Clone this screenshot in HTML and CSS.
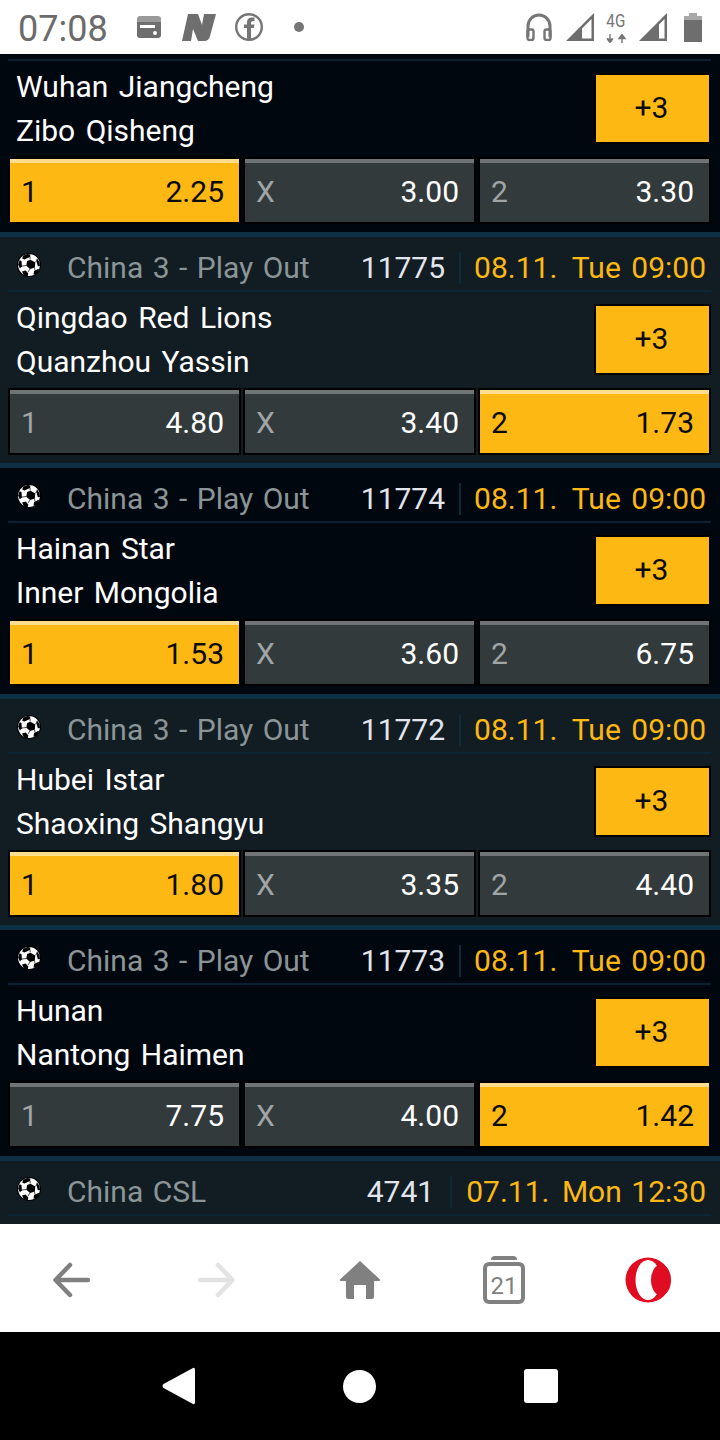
FILE: index.html
```html
<!DOCTYPE html>
<html lang="en">
<head>
<meta charset="utf-8">
<title>Odds</title>
<link rel="stylesheet" href="styles.css">
</head>
<body>
<svg class="defs" width="0" height="0" aria-hidden="true">
  <symbol id="ball" viewBox="0 0 24 24">
    <circle cx="12" cy="12" r="12" fill="#000"/>
    <circle cx="12" cy="12" r="10.900" fill="#fff"/>
    <path d="M13.500 6.800l4.800 2.600-.5 5-4.700 1.600-3.800-3.200.8-4.700z" fill="#000"/>
    <path d="M6 2.800l4.500-1.800 3 .4-.6 2.600-5.400 2.400-2.200-.6z" fill="#000"/>
    <path d="M1.200 11.500l1.300-4.300 2 .8.400 5.200-2 2.200z" fill="#000"/>
    <path d="M20 5.200l2.600 4.300.4 3.500-2.200.3-1.500-5.800z" fill="#000"/>
    <path d="M5 18.600l3.700-1 2.600 2.800-.5 3-3.800-.8z" fill="#000"/>
    <path d="M16.500 21.800l.6-3.800 4-1.900 1 .5-1.900 3.800z" fill="#000"/>
    <path d="M13 6.500l.2-3M18 9.500l1.500-1.500M17.500 14.500l.5 3M13 16l-2 3M9.500 12.500L5 13" stroke="#000" stroke-width=".7" fill="none"/>
  </symbol>
</svg>
<div class="screen">
  <header class="status">
    <span class="clock">07:08</span>
    <svg class="s-card" width="24" height="22" viewBox="0 0 24 22"><path d="M3 0h18a3 3 0 0 1 3 3v3H0V3a3 3 0 0 1 3-3z" fill="#9a9a9a"/><path fill-rule="evenodd" d="M0 6h24v13a3 3 0 0 1-3 3H3a3 3 0 0 1-3-3zM3 9v3h15V9zM18 15a2 2 0 0 0 0 4 2 2 0 0 0 0-4z" fill="#6e6e6e"/></svg>
    <svg class="s-n" width="34" height="27" viewBox="0 0 34 27"><path d="M6 0h10l4 11 2-11h12l-6 22q-1 5-6 5h-6l-5-12-2 12H0z" fill="#6e6e6e"/></svg>
    <svg class="s-fb" width="28" height="28" viewBox="0 0 28 28"><circle cx="14" cy="14" r="12.800" fill="none" stroke="#757575" stroke-width="2.400"/><path d="M12 26v-11H9v-3.500h3V9q0-4.500 5-4.500h2.500V8H18q-2 0-2 1.700v1.800h3.500l-.6 3.500H16v11z" fill="#757575"/></svg>
    <span class="s-dot"></span>
    <span class="status-right">
      <svg width="26" height="28" viewBox="0 0 26 28"><path d="M2 24V13a11 11 0 0 1 22 0v11" fill="none" stroke="#757575" stroke-width="3"/><rect x="1.500" y="16.500" width="6" height="10.500" rx="2" fill="none" stroke="#757575" stroke-width="2.400"/><rect x="18.500" y="16.500" width="6" height="10.500" rx="2" fill="none" stroke="#757575" stroke-width="2.400"/></svg>
      <svg class="s-sig" width="28" height="28" viewBox="0 0 28 28"><path fill-rule="evenodd" d="M0 28L28 0v28zM16 25.500h9.500V6L16 15.500z" fill="#6e6e6e"/></svg>
      <span class="net"><span class="net-t">4G</span><svg width="20" height="9" viewBox="0 0 20 9"><path d="M4 0v5M1 4.500l3 4 3-4M16 9V3M13 4.500l3-4 3 4z" fill="#757575" stroke="#757575" stroke-width="1.400"/></svg></span>
      <svg class="s-sig2" width="28" height="28" viewBox="0 0 28 28"><path fill-rule="evenodd" d="M0 28L28 0v28zM20 25.500h5.500V6L20 11.500z" fill="#6e6e6e"/></svg>
      <svg class="s-bat" width="18" height="29" viewBox="0 0 18 29"><path d="M5 0h8v3H5z" fill="#a8a8a8"/><path d="M0 3h18v5H0z" fill="#a8a8a8"/><path d="M0 7h18v22H0z" fill="#6e6e6e"/></svg>
    </span>
  </header>

  <main class="feed">
    <div class="feed-inner">

      <section class="card card-dark">
        <div class="card-head">
          <svg class="ball" width="24" height="24"><use href="#ball"/></svg>
          <span class="league">China 3 - Play Out</span>
          <span class="code">11776</span>
          <span class="when">08.11. &nbsp;<span class="day">Tue</span> &nbsp;09:00</span>
        </div>
        <div class="match">
          <div class="teams"><div>Wuhan Jiangcheng</div><div>Zibo Qisheng</div></div>
          <button class="more">+3</button>
        </div>
        <div class="odds">
          <div class="odd on"><span class="tag">1</span><span class="val">2.25</span></div>
          <div class="odd"><span class="tag">X</span><span class="val">3.00</span></div>
          <div class="odd"><span class="tag">2</span><span class="val">3.30</span></div>
        </div>
      </section>

      <section class="card card-light">
        <div class="card-head">
          <svg class="ball" width="24" height="24"><use href="#ball"/></svg>
          <span class="league">China 3 - Play Out</span>
          <span class="code">11775</span>
          <span class="when">08.11. &nbsp;<span class="day">Tue</span> &nbsp;09:00</span>
        </div>
        <div class="match">
          <div class="teams"><div>Qingdao Red Lions</div><div>Quanzhou Yassin</div></div>
          <button class="more">+3</button>
        </div>
        <div class="odds">
          <div class="odd"><span class="tag">1</span><span class="val">4.80</span></div>
          <div class="odd"><span class="tag">X</span><span class="val">3.40</span></div>
          <div class="odd on"><span class="tag">2</span><span class="val">1.73</span></div>
        </div>
      </section>

      <section class="card card-dark">
        <div class="card-head">
          <svg class="ball" width="24" height="24"><use href="#ball"/></svg>
          <span class="league">China 3 - Play Out</span>
          <span class="code">11774</span>
          <span class="when">08.11. &nbsp;<span class="day">Tue</span> &nbsp;09:00</span>
        </div>
        <div class="match">
          <div class="teams"><div>Hainan Star</div><div>Inner Mongolia</div></div>
          <button class="more">+3</button>
        </div>
        <div class="odds">
          <div class="odd on"><span class="tag">1</span><span class="val">1.53</span></div>
          <div class="odd"><span class="tag">X</span><span class="val">3.60</span></div>
          <div class="odd"><span class="tag">2</span><span class="val">6.75</span></div>
        </div>
      </section>

      <section class="card card-light">
        <div class="card-head">
          <svg class="ball" width="24" height="24"><use href="#ball"/></svg>
          <span class="league">China 3 - Play Out</span>
          <span class="code">11772</span>
          <span class="when">08.11. &nbsp;<span class="day">Tue</span> &nbsp;09:00</span>
        </div>
        <div class="match">
          <div class="teams"><div>Hubei Istar</div><div>Shaoxing Shangyu</div></div>
          <button class="more">+3</button>
        </div>
        <div class="odds">
          <div class="odd on"><span class="tag">1</span><span class="val">1.80</span></div>
          <div class="odd"><span class="tag">X</span><span class="val">3.35</span></div>
          <div class="odd"><span class="tag">2</span><span class="val">4.40</span></div>
        </div>
      </section>

      <section class="card card-dark">
        <div class="card-head">
          <svg class="ball" width="24" height="24"><use href="#ball"/></svg>
          <span class="league">China 3 - Play Out</span>
          <span class="code">11773</span>
          <span class="when">08.11. &nbsp;<span class="day">Tue</span> &nbsp;09:00</span>
        </div>
        <div class="match">
          <div class="teams"><div>Hunan</div><div>Nantong Haimen</div></div>
          <button class="more">+3</button>
        </div>
        <div class="odds">
          <div class="odd"><span class="tag">1</span><span class="val">7.75</span></div>
          <div class="odd"><span class="tag">X</span><span class="val">4.00</span></div>
          <div class="odd on"><span class="tag">2</span><span class="val">1.42</span></div>
        </div>
      </section>

      <section class="card card-light">
        <div class="card-head">
          <svg class="ball" width="24" height="24"><use href="#ball"/></svg>
          <span class="league">China CSL</span>
          <span class="code code-short">4741</span>
          <span class="when">07.11. &nbsp;<span class="day day-mon">Mon</span> &nbsp;12:30</span>
        </div>
      </section>

    </div>
  </main>

  <nav class="toolbar">
    <svg width="40" height="36" viewBox="0 0 40 36"><path d="M36 18H4M18 3L3.500 18 18 33" fill="none" stroke="#808080" stroke-width="4.500" stroke-linecap="round" stroke-linejoin="round"/></svg>
    <svg width="40" height="36" viewBox="0 0 40 36"><path d="M4 18h32M22 3l14.500 15L22 33" fill="none" stroke="#e3e3e3" stroke-width="4.500" stroke-linecap="round" stroke-linejoin="round"/></svg>
    <svg width="42" height="38" viewBox="0 0 42 38"><path d="M21 0L41 18.500q.6 1.500-1 1.500h-5v15.500q0 2.500-2.500 2.500H27V24H15v14H9.500Q7 38 7 35.500V20H2q-1.600 0-1-1.500z" fill="#808080"/></svg>
    <svg class="tab" width="42" height="48" viewBox="0 0 42 48"><path d="M8 4q0-4 4-4h18q4 0 4 4z" fill="#808080"/><rect x="2" y="8" width="38" height="38" rx="4" fill="none" stroke="#808080" stroke-width="4"/><text x="21" y="38" text-anchor="middle" class="tab-num">21</text></svg>
    <svg width="46" height="46" viewBox="0 0 46 46"><circle cx="23" cy="23" r="22.500" fill="#e00c21"/><ellipse cx="23" cy="23" rx="12.500" ry="20" fill="#fff"/><ellipse cx="36" cy="23" rx="10" ry="15.500" fill="#e00c21"/></svg>
  </nav>

  <footer class="sysnav">
    <svg width="33" height="38" viewBox="0 0 33 38"><path d="M31 1q2-.8 2 2v32q0 2.800-2 2L1.500 21q-2-2 0-4z" fill="#fff"/></svg>
    <span class="home-dot"></span>
    <span class="square"></span>
  </footer>
</div>
</body>
</html>
```

FILE: styles.css
```css
* { box-sizing: border-box; }
html, body { margin: 0; padding: 0; }
body { font-family: Roboto, "Liberation Sans", sans-serif; background: #000; }
.defs { position: absolute; }
.screen { width: 720px; height: 1440px; display: flex; flex-direction: column; overflow: hidden; }

.status { height: 54px; flex: none; background: #fff; display: flex; align-items: center; padding: 0 18px; color: #6b6b6b; }
.clock { font-size: 36px; line-height: 54px; width: 119px; padding-top: 3px; white-space: nowrap; }
.s-card { margin-right: 21px; }
.s-n { margin-right: 19px; }
.s-fb { margin-right: 31px; }
.s-dot { width: 10px; height: 10px; border-radius: 50%; background: #757575; }
.status-right { margin-left: auto; display: flex; align-items: center; }
.s-sig { margin-left: 14px; }
.net { margin-left: 12px; width: 20px; display: flex; flex-direction: column; align-items: center; }
.net-t { font-size: 19px; line-height: 17px; margin-bottom: 5px; color: #757575; display: inline-block; transform: scaleX(.8); }
.s-sig2 { margin-left: 13px; }
.s-bat { margin-left: 17px; }

.feed { flex: 1; overflow: hidden; background: #01070f; }
.feed-inner { margin-top: -53px; }

.card { height: 231px; border-top: 5px solid #0e3044; }
.card-dark { background: #01070f; }
.card-light { background: #121c23; }

.card-head { height: 55px; margin: 0 9px 0 8px; padding: 8px 5px 0 9px; border-bottom: 2px solid #0c2733; display: flex; align-items: center; font-size: 30px; white-space: nowrap; }
.card-dark .card-head { border-bottom-color: #0b2030; }
.ball { flex: none; margin: 0 26px 5px 0; }
.league { flex: 1; color: #8b9597; word-spacing: 2px; }
.code { color: #e2e6ec; padding-right: 14px; margin-right: 13px; border-right: 2px solid #0e2a38; line-height: 32px; }
.code-short { padding-right: 16px; margin-right: 14px; }
.when { color: #fdb813; word-spacing: -1.2px; }
.day { margin: 0 -2px 0 2px; }
.day-mon { margin: 0 -3px 0 0; }

.match { height: 96px; padding: 0 9px 0 16px; display: flex; justify-content: space-between; }
.teams { padding-top: 4px; font-size: 30px; line-height: 44px; color: #fff; word-spacing: 3px; }
.more { margin-top: 12px; width: 117px; height: 71px; background: #fdb813; border: 2px solid #000; color: #0b0b0b; font: 30px Roboto, sans-serif; padding: 0 2px 2px 0; }

.odds { display: grid; grid-template-columns: repeat(3, 233px); gap: 2px; padding: 0 9px 0 8px; }
.odd { height: 67px; border: 2px solid #000; background: #323a3c; display: flex; align-items: center; justify-content: space-between; padding: 2px 15px 0 11px; font-size: 30px; box-shadow: inset 0 4px 0 #6f7476; }
.tag { color: #a0a5a6; }
.val { color: #fff; }
.odd.on { background: #fdb813; box-shadow: inset 0 4px 0 #fedd8c; }
.odd.on .tag, .odd.on .val { color: #0b0b0b; }

.toolbar { height: 108px; flex: none; background: #fff; padding-top: 3px; display: grid; grid-template-columns: repeat(5, 144px); justify-items: center; align-items: center; }
.tab-num { font: 24px Roboto, sans-serif; fill: #808080; }

.sysnav { height: 108px; flex: none; background: #000; display: flex; align-items: center; padding-left: 162px; gap: 148px; }
.home-dot { width: 33px; height: 33px; border-radius: 50%; background: #fff; }
.square { width: 34px; height: 34px; border-radius: 3px; background: #fff; }
```
